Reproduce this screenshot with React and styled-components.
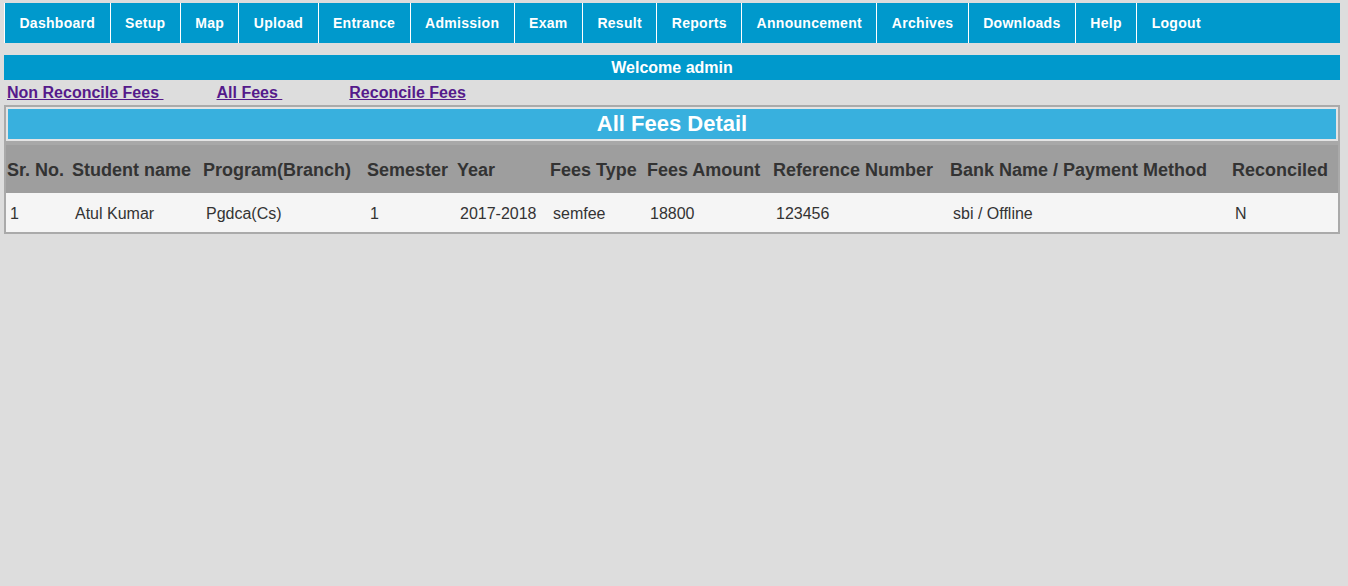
import React from "react";
import styled, { createGlobalStyle } from "styled-components";

const GlobalStyle = createGlobalStyle`
  html, body {
    margin: 0;
    padding: 0;
    background: #dddddd;
    font-family: "Liberation Sans", Arial, sans-serif;
  }
`;

const Page = styled.div`
  padding: 3px 8px 0 4px;
`;

const Nav = styled.ul`
  display: flex;
  margin: 0;
  padding: 0;
  list-style: none;
  height: 40px;
  background: #0099cc;
`;

const NavItem = styled.li`
  border-left: 1px solid #ffffff;
  padding: 0 14.4px;
  line-height: 40px;
  font-size: 14px;
  font-weight: bold;
  letter-spacing: 0.3px;
  color: #ffffff;
  white-space: nowrap;
  cursor: pointer;
`;

const Welcome = styled.div`
  margin-top: 12px;
  height: 25px;
  line-height: 25px;
  background: #0099cc;
  color: #ffffff;
  font-size: 16px;
  font-weight: bold;
  text-align: center;
`;

const LinkRow = styled.div`
  display: flex;
  padding: 4px 0 3px 3px;
  line-height: 18px;
`;

const FeeLink = styled.a`
  margin-left: ${(p) => p.$gap || 0}px;
  font-size: 16px;
  font-weight: bold;
  color: #551a8b;
  text-decoration: underline;
  white-space: pre;
  cursor: pointer;
`;

const Table = styled.table`
  width: 1336px;
  table-layout: fixed;
  border-collapse: separate;
  border-spacing: 0;
  border: 2px solid #aaaaaa;
  background: #f5f5f5;
  color: #333333;
`;

const Caption = styled.th`
  border: 2px solid #e4e4e4;
  background: #38b0de;
  color: #ffffff;
  font-size: 22px;
  font-weight: bold;
  line-height: 30px;
  padding: 0;
  text-align: center;
`;

const HeadCell = styled.th`
  background: #9e9e9e;
  border-top: 4px solid #a8a8a8;
  padding: 15px 0 12px 1px;
  line-height: 21px;
  font-size: 18px;
  font-weight: bold;
  text-align: left;
  white-space: nowrap;
  overflow: hidden;
  color: #333333;
`;

const Cell = styled.td`
  padding: 12px 0 9px 4px;
  line-height: 18px;
  font-size: 16px;
  white-space: nowrap;
  color: #333333;
`;

const navItems = [
  "Dashboard", "Setup", "Map", "Upload", "Entrance", "Admission", "Exam",
  "Result", "Reports", "Announcement", "Archives", "Downloads", "Help", "Logout",
];

const columns = [
  { label: "Sr. No.", width: 65 },
  { label: "Student name", width: 131 },
  { label: "Program(Branch)", width: 164 },
  { label: "Semester", width: 90 },
  { label: "Year", width: 93 },
  { label: "Fees Type", width: 97 },
  { label: "Fees Amount", width: 126 },
  { label: "Reference Number", width: 177 },
  { label: "Bank Name / Payment Method", width: 282 },
  { label: "Reconciled", width: 107 },
];

const rows = [
  ["1", "Atul Kumar", "Pgdca(Cs)", "1", "2017-2018", "semfee", "18800", "123456", "sbi / Offline", "N"],
];

export default function App() {
  return (
    <>
      <GlobalStyle />
      <Page>
        <Nav>
          {navItems.map((item) => (
            <NavItem key={item}>{item}</NavItem>
          ))}
        </Nav>
        <Welcome>Welcome admin</Welcome>
        <LinkRow>
          <FeeLink>{"Non Reconcile Fees "}</FeeLink>
          <FeeLink $gap={53}>{"All Fees "}</FeeLink>
          <FeeLink $gap={67}>Reconcile Fees</FeeLink>
        </LinkRow>
        <Table>
          <colgroup>
            {columns.map((c) => (
              <col key={c.label} style={{ width: c.width }} />
            ))}
          </colgroup>
          <thead>
            <tr>
              <Caption colSpan={columns.length}>All Fees Detail</Caption>
            </tr>
            <tr>
              {columns.map((c) => (
                <HeadCell key={c.label}>{c.label}</HeadCell>
              ))}
            </tr>
          </thead>
          <tbody>
            {rows.map((r, i) => (
              <tr key={i}>
                {r.map((v, j) => (
                  <Cell key={j}>{v}</Cell>
                ))}
              </tr>
            ))}
          </tbody>
        </Table>
      </Page>
    </>
  );
}
